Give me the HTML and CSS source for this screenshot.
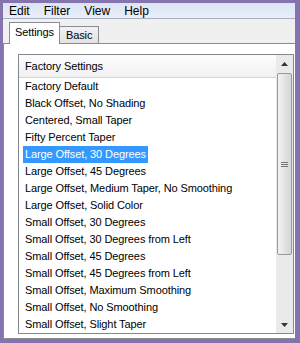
FILE: index.html
```html
<!DOCTYPE html>
<html lang="en">
<head>
  <meta charset="UTF-8" />
  <title>Drop Shadow Presets</title>
  <link rel="stylesheet" href="styles.css">
</head>
<body>
  <div class="window">
    <div class="menubar">
      <span>Edit</span>
      <span>Filter</span>
      <span>View</span>
      <span>Help</span>
    </div>
    <div class="tabs">
      <div class="tab active">Settings</div>
      <div class="tab">Basic</div>
    </div>
    <div class="panel">
      <div class="listbox">
        <div class="list">
          <div class="list-header">Factory Settings</div>
          <div class="row"><span>Factory Default</span></div>
          <div class="row"><span>Black Offset, No Shading</span></div>
          <div class="row"><span>Centered, Small Taper</span></div>
          <div class="row"><span>Fifty Percent Taper</span></div>
          <div class="row selected"><span>Large Offset, 30 Degrees</span></div>
          <div class="row"><span>Large Offset, 45 Degrees</span></div>
          <div class="row"><span>Large Offset, Medium Taper, No Smoothing</span></div>
          <div class="row"><span>Large Offset, Solid Color</span></div>
          <div class="row"><span>Small Offset, 30 Degrees</span></div>
          <div class="row"><span>Small Offset, 30 Degrees from Left</span></div>
          <div class="row"><span>Small Offset, 45 Degrees</span></div>
          <div class="row"><span>Small Offset, 45 Degrees from Left</span></div>
          <div class="row"><span>Small Offset, Maximum Smoothing</span></div>
          <div class="row"><span>Small Offset, No Smoothing</span></div>
          <div class="row"><span>Small Offset, Slight Taper</span></div>
        </div>
        <div class="scrollbar">
          <div class="arrow">
            <svg width="7" height="4" viewBox="0 0 7 4"><path d="M0 4 L3.5 0 L7 4 Z" fill="#333"/></svg>
          </div>
          <div class="thumb">
            <svg width="7" height="7" viewBox="0 0 7 7"><path d="M0 1.5 H7 M0 3.5 H7 M0 5.5 H7" stroke="#777" stroke-width="1"/></svg>
          </div>
          <div class="track"></div>
          <div class="arrow">
            <svg width="7" height="4" viewBox="0 0 7 4"><path d="M0 0 L3.5 4 L7 0 Z" fill="#333"/></svg>
          </div>
        </div>
      </div>
    </div>
  </div>
</body>
</html>
```

FILE: styles.css
```css
body {
  margin: 0;
  font-family: Tahoma, 'Liberation Sans', Arial, sans-serif;
}
.window {
  width: 300px;
  height: 343px;
  box-sizing: border-box;
  border: 3px solid #8473ac;
  border-right-width: 5px;
  border-bottom-width: 4px;
  background: #f0f0f0;
  display: flex;
  flex-direction: column;
}
.menubar {
  height: 15px;
  display: flex;
  gap: 14px;
  padding-left: 6px;
  align-items: center;
  font-size: 12px;
  color: #000;
  background: linear-gradient(#dbe4f6, #e9eef9);
  border-bottom: 1px solid #a8afbf;
}
.tabs {
  height: 24px;
  display: flex;
  align-items: flex-end;
  padding-left: 6px;
  position: relative;
  z-index: 1;
}
.tab {
  font-size: 11px;
  letter-spacing: -0.1px;
  height: 16px;
  padding: 0 6px;
  line-height: 17px;
  border: 1px solid #898c95;
  border-bottom: none;
  background: linear-gradient(#f2f2f2, #e2e2e2);
}
.tab.active {
  height: 21px;
  line-height: 18px;
  padding: 0 5px;
  background: #fff;
  margin-bottom: -1px;
  position: relative;
  z-index: 2;
}
.tab.active + .tab {
  margin-left: -1px;
}
.panel {
  flex: 1;
  background: #fff;
  border: 1px solid #898c95;
  border-right: none;
  padding: 10px 1px 4px 14px;
  display: flex;
}
.listbox {
  flex: 1;
  border: 1px solid #828790;
  display: flex;
  overflow: hidden;
}
.list {
  flex: 1;
  font-size: 11px;
  letter-spacing: -0.1px;
  color: #000;
}
.list-header {
  height: 22px;
  line-height: 22px;
  padding-left: 6px;
  border-bottom: 1px solid #d5d5d5;
  background: linear-gradient(#fdfdfd, #f1f1f1);
}
.row {
  height: 17px;
  line-height: 17px;
  padding-left: 4px;
  white-space: nowrap;
}
.row span {
  padding: 0 2px;
  display: inline-block;
}
.row.selected span {
  background: #3399ff;
  color: #fff;
}
.scrollbar {
  width: 17px;
  display: flex;
  flex-direction: column;
  background: #eaeaea;
}
.arrow {
  height: 17px;
  display: flex;
  align-items: center;
  justify-content: center;
}
.thumb {
  height: 182px;
  margin: 1px 1px 0 1px;
  box-sizing: border-box;
  border: 1px solid #9a9a9a;
  border-radius: 2px;
  background: linear-gradient(90deg, #f3f3f3, #e0e0e0 60%, #d6d6d6);
  display: flex;
  align-items: center;
  justify-content: center;
}
.track {
  flex: 1;
}
```
